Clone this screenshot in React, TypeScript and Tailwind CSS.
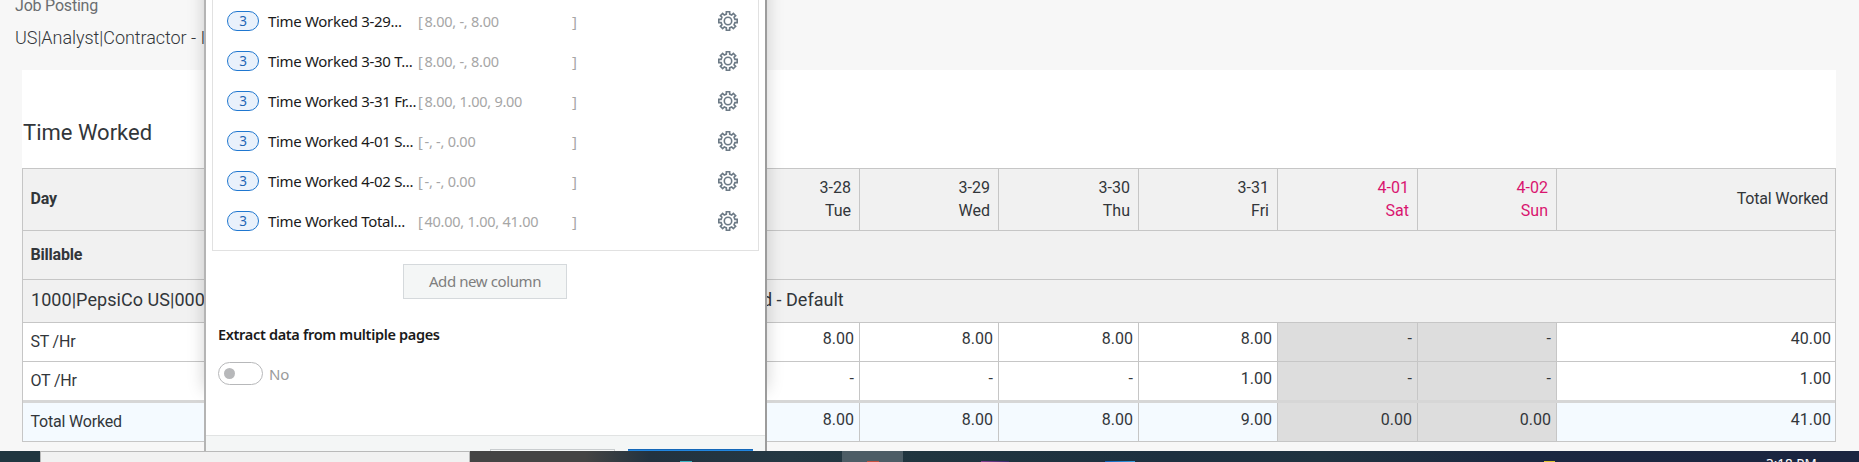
import React from "react";

const days = [
  { date: "3-28", day: "Tue", st: "8.00", ot: "-", total: "8.00" },
  { date: "3-29", day: "Wed", st: "8.00", ot: "-", total: "8.00" },
  { date: "3-30", day: "Thu", st: "8.00", ot: "-", total: "8.00" },
  { date: "3-31", day: "Fri", st: "8.00", ot: "1.00", total: "9.00" },
  { date: "4-01", day: "Sat", st: "-", ot: "-", total: "0.00", weekend: true },
  { date: "4-02", day: "Sun", st: "-", ot: "-", total: "0.00", weekend: true },
];

const fields = [
  { name: "Time Worked 3-29...", value: "8.00, -, 8.00" },
  { name: "Time Worked 3-30 T...", value: "8.00, -, 8.00" },
  { name: "Time Worked 3-31 Fr...", value: "8.00, 1.00, 9.00" },
  { name: "Time Worked 4-01 S...", value: "-, -, 0.00" },
  { name: "Time Worked 4-02 S...", value: "-, -, 0.00" },
  { name: "Time Worked Total...", value: "40.00, 1.00, 41.00" },
];

const GRID =
  "grid grid-cols-[697px_140px_139px_140px_139px_140px_139px_279px] border-b border-[#c6c6c6]";

function gearPoints() {
  const pts: string[] = [];
  for (let i = 0; i < 8; i++) {
    const base = (i * Math.PI) / 4;
    const corners: [number, number][] = [
      [-1.65, 6.9],
      [-1.65, 9.2],
      [1.65, 9.2],
      [1.65, 6.9],
    ];
    for (const [x, y] of corners) {
      const px = 10 + x * Math.cos(base) + y * Math.sin(base);
      const py = 10 + x * Math.sin(base) - y * Math.cos(base);
      pts.push(`${px.toFixed(2)},${py.toFixed(2)}`);
    }
  }
  return pts.join(" ");
}

function Gear() {
  return (
    <svg width="20" height="20" viewBox="0 0 20 20" fill="none" stroke="#6c7a86" strokeWidth="1.6">
      <polygon points={gearPoints()} />
      <circle cx="10" cy="10" r="3.7" />
    </svg>
  );
}

function ValueRow({ label, field, total }: { label: string; field: "st" | "ot" | "total"; total: string }) {
  const last = field === "total";
  const bg = last ? "bg-[#f4faff]" : "bg-white";
  const pad = field === "st" ? "pt-[4px]" : "pt-[5px]";
  return (
    <div className={`${GRID} ${bg} ${field === "ot" ? "h-[41px] border-b-3 !border-b-[#d6d6d6]" : "h-[39px]"}`}>
      <div className="border-r border-[#c6c6c6] pt-[7px] pl-[7.5px] tracking-[-0.2px]">{label}</div>
      {days.map((d) => (
        <div key={d.date} className={`border-r border-[#c6c6c6] pr-[5px] text-right ${pad} ${d.weekend ? "bg-[#dddddd]" : ""}`}>
          {d[field]}
        </div>
      ))}
      <div className={`pr-[5px] text-right ${pad}`}>{total}</div>
    </div>
  );
}

function Timesheet() {
  return (
    <main className="h-[451px] overflow-hidden bg-[#f7f7f7] font-['Roboto',sans-serif] text-[#32363a]">
      <div className="flex h-[70px] flex-col pl-[15px]">
        <span className="-mt-[6px] h-6 text-[16px] leading-6 tracking-[-0.2px] text-[#6a6d70]">Job Posting</span>
        <span className="mt-[8px] text-[18px] leading-6 font-light tracking-[-0.05px]">US|Analyst|Contractor - I</span>
      </div>
      <section className="ml-[22px] w-[1814px] bg-white">
        <h1 className="h-[98px] pt-[47px] pl-[1px] text-[22px] leading-8">Time Worked</h1>
        <div className="border-x border-t border-[#c6c6c6] text-[16px] leading-[23px]">
          <div className={`${GRID} h-[62px] bg-[#f1f1f1]`}>
            <div className="flex items-center border-r border-[#c6c6c6] pb-[2px] pl-[7.5px] font-bold tracking-[-0.2px]">Day</div>
            {days.map((d) => (
              <div
                key={d.date}
                className={`border-r border-[#c6c6c6] pt-[7px] pr-2 text-right ${d.weekend ? "text-[#d9156f]" : ""}`}
              >
                <div>{d.date}</div>
                <div>{d.day}</div>
              </div>
            ))}
            <div className="flex items-center justify-end pr-2 pb-[2px] tracking-[-0.2px]">Total Worked</div>
          </div>
          <div className="flex h-[49px] items-center border-b border-[#c6c6c6] bg-[#f1f1f1] pb-[2px] pl-[7.5px] font-bold tracking-[-0.2px]">
            Billable
          </div>
          <div className="flex h-[43px] items-center border-b border-[#c6c6c6] bg-[#f1f1f1] pb-[3px] pl-2 text-[18px]">
            <span className="w-[731px] tracking-[0.05px]">1000|PepsiCo US|000</span>
            <span>d - Default</span>
          </div>
          <ValueRow label="ST /Hr" field="st" total="40.00" />
          <ValueRow label="OT /Hr" field="ot" total="1.00" />
          <ValueRow label="Total Worked" field="total" total="41.00" />
        </div>
      </section>
    </main>
  );
}

function Dialog() {
  return (
    <div className="absolute top-0 left-[204px] h-[451px] w-[563px] font-['Noto_Sans',sans-serif] text-[15px]">
      <div className="absolute -top-10 right-0 left-0 h-[430px] shadow-[0_0_16px_rgba(0,0,0,0.18)]" />
      <div className="relative flex h-full flex-col overflow-hidden border-r-2 border-l-2 border-r-[#9c9c9c] border-l-[#b4b4b4] bg-white">
        <div className="mr-[6px] ml-[6px] h-[251px] border-x border-b border-[#e1e1e1] pt-px">
          {fields.map((f) => (
            <div key={f.name} className="flex h-10 items-center pr-5 pl-[14px] leading-5">
              <span className="flex h-5 w-8 items-center justify-center rounded-full border border-[#1f77d0] bg-[#e9f1fb] text-[13.5px] text-[#1f66b5]">
                3
              </span>
              <span className="ml-[9px] w-[150px] tracking-[-0.32px] whitespace-nowrap text-[#1a1a1a]">{f.name}</span>
              <span className="w-[154px] text-[14.5px] tracking-[-0.25px] whitespace-nowrap text-[#a6a6a6]">
                <span className="mr-[2px]">[</span>
                {f.value}
              </span>
              <span className="text-[#a6a6a6]">]</span>
              <span className="ml-auto">
                <Gear />
              </span>
            </div>
          ))}
        </div>
        <button className="mt-[13px] ml-[197px] h-[35px] w-[164px] shrink-0 border border-[#d5d9dc] bg-[#f4f6f6] tracking-[-0.4px] text-[#7e7e7e]">
          Add new column
        </button>
        <div className="mt-[25px] ml-3 text-[14.5px] leading-5 font-semibold tracking-[-0.33px] text-[#1a1a1a]">
          Extract data from multiple pages
        </div>
        <div className="mt-[18px] ml-3 flex h-[23px] items-center">
          <span className="flex h-[23px] w-[45px] items-center rounded-full border border-[#b7b8ba] pl-[5px]">
            <span className="h-[11px] w-[11px] rounded-full bg-[#b7b8ba]" />
          </span>
          <span className="mt-[2px] ml-[6px] tracking-[-0.2px] text-[#9a9a9a]">No</span>
        </div>
        <div className="mt-auto flex h-4 items-end border-t border-[#e1e3e3] bg-[#f4f6f6] pl-[284px]">
          <span className="h-[2px] w-[125px] border-x border-t border-[#c9cdcf]" />
          <span className="ml-[13px] h-[2px] w-[125px] border-t border-[#1567b8] bg-[#2186e0]" />
        </div>
      </div>
    </div>
  );
}

function Taskbar() {
  return (
    <footer className="flex h-[11px] items-end overflow-hidden bg-[#203640]">
      <div className="ml-10 h-full w-[430px] border-x border-t border-[#b9b9b9] bg-[#f1f1f1]" />
      <div className="flex h-full flex-1 items-end bg-[linear-gradient(90deg,#444444_0px,#444444_115px,#22323f_180px,#243843_320px,#20353f_450px,#1d3040_700px,#1f3340_850px,#1b2841_1050px,#1b2540_1389px)]">
        <span className="ml-[210px] h-px w-3 bg-[#3cb4c4]" />
        <span className="ml-[150px] flex h-full w-[61px] items-end justify-center bg-[#4d5d66]">
          <span className="h-px w-3 bg-[#c8503f]" />
        </span>
        <span className="ml-[78px] h-px w-7 bg-linear-to-r from-[#8b3f93] to-[#33286b]" />
        <span className="ml-24 h-px w-[30px] bg-linear-to-r from-[#1261bd] to-[#3aa0dd]" />
        <span className="ml-[409px] h-px w-[11px] bg-[#e0c330]" />
        <span className="ml-[211px] h-[8px] font-['Noto_Sans',sans-serif] text-[13.5px] leading-[20px] whitespace-nowrap text-white">
          3:18 PM
        </span>
      </div>
    </footer>
  );
}

export default function App() {
  return (
    <div className="relative h-[462px] w-[1859px] overflow-hidden">
      <Timesheet />
      <Dialog />
      <Taskbar />
    </div>
  );
}
